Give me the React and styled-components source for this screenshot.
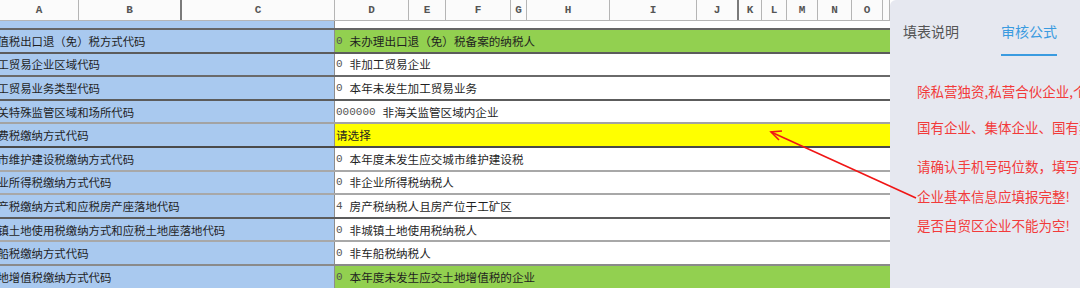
import React from 'react';
import styled, { createGlobalStyle } from 'styled-components';

const columns = [
  ['A', 79], ['B', 103, true], ['C', 153], ['D', 74], ['E', 37], ['F', 65],
  ['G', 16], ['H', 83], ['I', 87], ['J', 42, true], ['K', 23], ['L', 25],
  ['M', 31], ['N', 34], ['O', 31], ['', 7],
];

const rows = [
  { label: '增值税出口退（免）税方式代码', code: '0', value: '未办理出口退（免）税备案的纳税人', fill: '#92d050', line: '#5c5c5c' },
  { label: '加工贸易企业区域代码', code: '0', value: '非加工贸易企业', line: '#6a6a6a' },
  { label: '加工贸易业务类型代码', code: '0', value: '本年未发生加工贸易业务', line: '#5c5c5c' },
  { label: '海关特殊监管区域和场所代码', code: '000000', value: '非海关监管区域内企业', line: '#a3a3a3' },
  { label: '消费税缴纳方式代码', value: '请选择', fill: '#ffff00', line: '#4a4a4a' },
  { label: '城市维护建设税缴纳方式代码', code: '0', value: '本年度未发生应交城市维护建设税', line: '#a8a8a8' },
  { label: '企业所得税缴纳方式代码', code: '0', value: '非企业所得税纳税人', line: '#a8a8a8' },
  { label: '房产税缴纳方式和应税房产座落地代码', code: '4', value: '房产税纳税人且房产位于工矿区', line: '#5c5c5c' },
  { label: '城镇土地使用税缴纳方式和应税土地座落地代码', code: '0', value: '非城镇土地使用税纳税人', line: '#a8a8a8' },
  { label: '车船税缴纳方式代码', code: '0', value: '非车船税纳税人', line: '#8a8a8a' },
  { label: '土地增值税缴纳方式代码', code: '0', value: '本年度未发生应交土地增值税的企业', fill: '#92d050', line: '#5c5c5c' },
];

const rules = [
  { text: '除私营独资,私营合伙企业,个体工商户外，注册资本不能为空！', top: 25 },
  { text: '国有企业、集体企业、国有独资公司的投资方不能为空！', top: 16 },
  { text: '请确认手机号码位数，填写手机号码！', top: 19 },
  { text: '企业基本信息应填报完整!', top: 10 },
  { text: '是否自贸区企业不能为空!', top: 9 },
];

const GlobalStyle = createGlobalStyle`
  body {
    margin: 0;
    overflow: hidden;
    font-family: "Noto Sans CJK SC", "Noto Sans", sans-serif;
  }
`;

const App = () => {
  return (
    <>
      <GlobalStyle />
      <Page>
        <Sheet>
          <HeaderRow>
            {columns.map(([name, width, thick], i) => (
              <HeaderCell key={i} $width={width} $thick={thick}>{name}</HeaderCell>
            ))}
          </HeaderRow>
          <Strip>
            <LabelCell />
            <ValueCell />
          </Strip>
          {rows.map((row, i) => (
            <Row key={i} $line={row.line}>
              <LabelCell>
                <LabelText>{row.label}</LabelText>
              </LabelCell>
              <ValueCell $fill={row.fill}>
                {row.code && <Code>{row.code}</Code>}
                {row.value}
              </ValueCell>
            </Row>
          ))}
        </Sheet>
        <Panel>
          <Tabs>
            <Tab>填表说明</Tab>
            <Tab $active>审核公式</Tab>
          </Tabs>
          <RuleList>
            {rules.map((rule, i) => (
              <Rule key={i} $top={rule.top}>{rule.text}</Rule>
            ))}
          </RuleList>
        </Panel>
        <Arrow width="1080" height="288" viewBox="0 0 1080 288">
          <line x1="916" y1="198" x2="771" y2="132" />
          <polyline points="782,131 771,132 779,140" />
        </Arrow>
      </Page>
    </>
  );
};

export default App;

const Page = styled.div`
  position: relative;
  display: flex;
  width: 1080px;
  height: 288px;
  overflow: hidden;
  background: #ffffff;
`;

const Sheet = styled.section`
  display: flex;
  flex-direction: column;
  width: 890px;
  flex-shrink: 0;
  overflow: hidden;
`;

const HeaderRow = styled.div`
  display: flex;
  height: 21px;
  flex-shrink: 0;
  background: #fbfbfb;
  border-bottom: 1px solid #b5b5b5;
  box-sizing: border-box;
`;

const HeaderCell = styled.div`
  width: ${(p) => p.$width}px;
  flex-shrink: 0;
  box-sizing: border-box;
  border-right: ${(p) => (p.$thick ? '2px solid #7a7a7a' : '1px solid #b5b5b5')};
  display: flex;
  align-items: center;
  justify-content: center;
  font-family: "Liberation Mono", "DejaVu Sans Mono", monospace;
  font-size: 11px;
  font-weight: bold;
  color: #555555;
`;

const Row = styled.div`
  display: grid;
  grid-template-columns: 335px 1fr;
  height: 23.6px;
  flex-shrink: 0;
  box-sizing: border-box;
  border-bottom: 2px solid ${(p) => p.$line};
`;

const Strip = styled(Row)`
  height: 9px;
  border-bottom: 2px solid #666666;
`;

const LabelCell = styled.div`
  background: #a9c9ef;
  border-right: 1px solid #8d8d8d;
  overflow: hidden;
  white-space: nowrap;
  display: flex;
  align-items: center;
`;

const LabelText = styled.span`
  margin-left: -14px;
  font-size: 11.4px;
  color: #1f1f1f;
`;

const ValueCell = styled.div`
  background: ${(p) => p.$fill || '#ffffff'};
  overflow: hidden;
  white-space: nowrap;
  display: flex;
  align-items: center;
  padding-left: 1px;
  font-size: 11.6px;
  color: #1f1f1f;
`;

const Code = styled.span`
  font-family: "Liberation Mono", "DejaVu Sans Mono", monospace;
  font-size: 11px;
  color: #555555;
  margin-right: 7px;
`;

const Panel = styled.aside`
  flex: 1;
  background: #e6e8f0;
  border-top-left-radius: 6px;
  overflow: hidden;
  display: flex;
  flex-direction: column;
`;

const Tabs = styled.div`
  display: flex;
  gap: 42px;
  padding: 20px 0 0 13px;
`;

const Tab = styled.div`
  font-size: 14px;
  line-height: 22px;
  padding-bottom: 12px;
  color: ${(p) => (p.$active ? '#3a9be0' : '#555555')};
  border-bottom: 2px solid ${(p) => (p.$active ? '#3a9be0' : 'transparent')};
`;

const RuleList = styled.div`
  display: flex;
  flex-direction: column;
  padding-left: 27px;
`;

const Rule = styled.div`
  margin-top: ${(p) => p.$top}px;
  font-size: 13.5px;
  line-height: 20px;
  color: #f23a3a;
  white-space: nowrap;
`;

const Arrow = styled.svg`
  position: absolute;
  left: 0;
  top: 0;
  pointer-events: none;
  fill: none;
  stroke: #f01515;
  stroke-width: 1.6;
`;
